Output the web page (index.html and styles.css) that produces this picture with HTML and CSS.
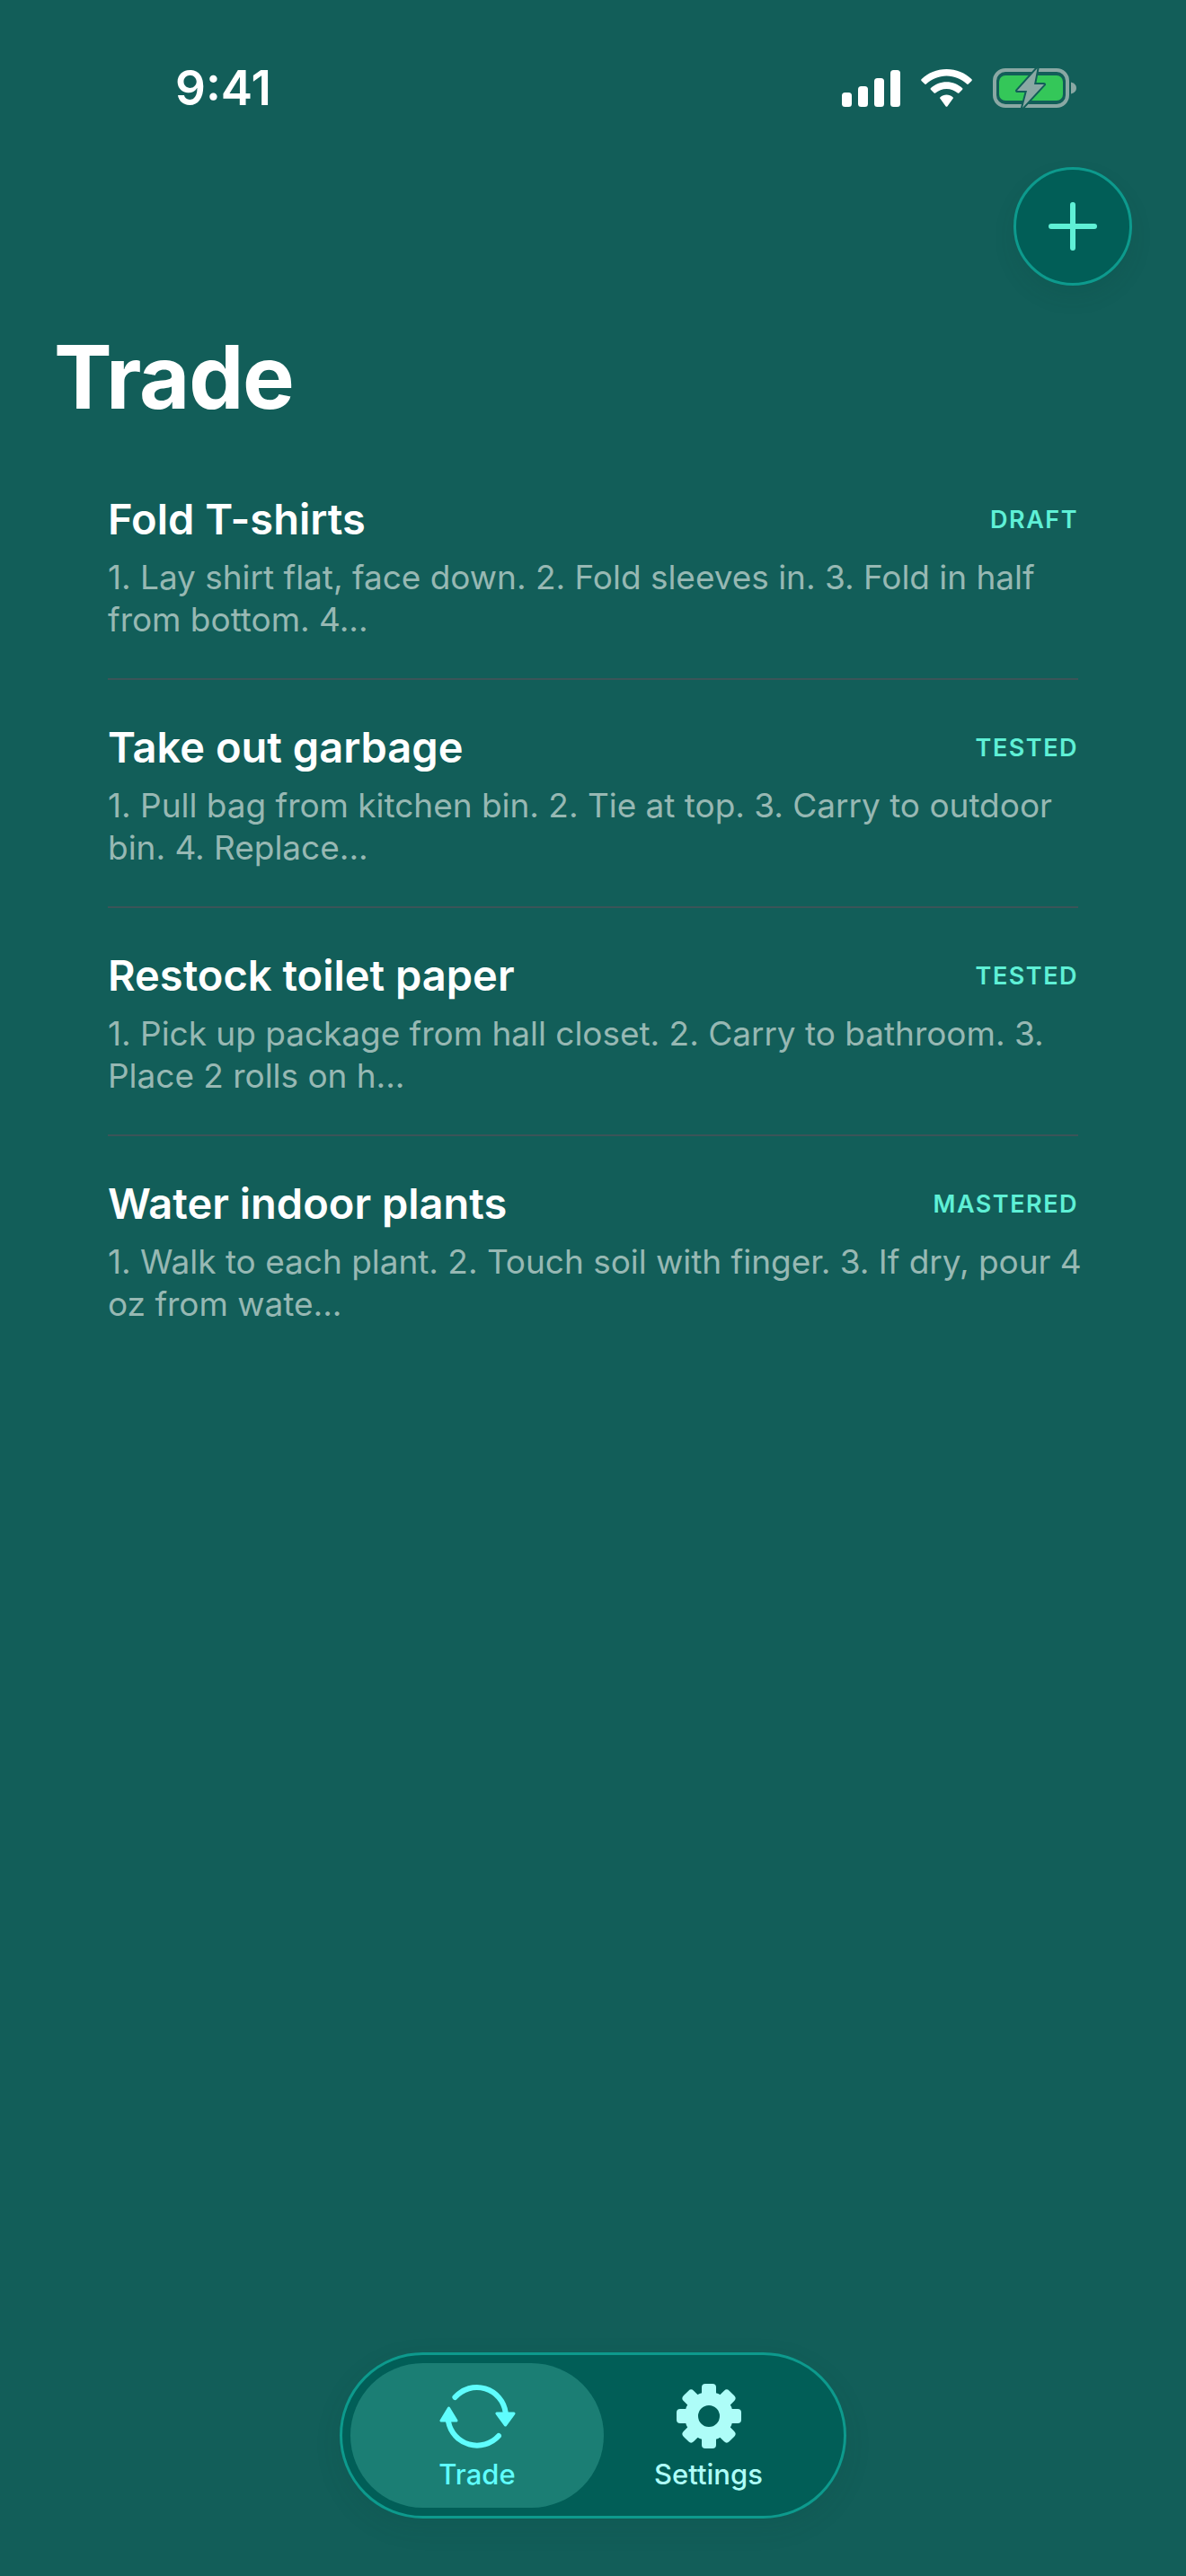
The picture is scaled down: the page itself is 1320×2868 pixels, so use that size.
FILE: index.html
```html
<!DOCTYPE html>
<html lang="en">
<head>
<meta charset="utf-8">
<title>Trade</title>
<link rel="stylesheet" href="styles.css">
</head>
<body>
<div class="screen">
  <header class="status">
    <span class="time">9:41</span>
    <div class="status-icons">
      <svg class="signal" width="65" height="41" viewBox="0 0 65 41"><rect x="0" y="25" width="11" height="16" rx="3.5"/><rect x="18" y="18" width="11" height="23" rx="3.5"/><rect x="36" y="9" width="11" height="32" rx="3.5"/><rect x="54" y="0" width="11" height="41" rx="3.5"/></svg>
      <svg class="wifi" width="57" height="42" viewBox="0 0 57 42"><path d="M28.500 0C17.500 0 7.800 4.200 0.500 11.300C0 11.800 0 12.400 0.500 12.900L4.200 16.600C4.700 17.100 5.300 17.100 5.900 16.600C12 11 19.900 7.500 28.500 7.500C37.100 7.500 45 11 51.100 16.600C51.700 17.100 52.300 17.100 52.800 16.600L56.500 12.900C57 12.400 57 11.800 56.500 11.300C49.200 4.200 39.500 0 28.500 0Z"/><path d="M28.500 14.300C21.800 14.300 15.700 16.900 11 21.100C10.400 21.600 10.400 22.200 10.900 22.700L14.600 26.400C15.100 26.900 15.700 26.900 16.200 26.500C19.500 23.700 23.800 21.900 28.500 21.900C33.200 21.900 37.500 23.700 40.800 26.500C41.300 26.900 41.900 26.900 42.400 26.400L46.100 22.700C46.600 22.200 46.600 21.600 46 21.100C41.300 16.900 35.200 14.300 28.500 14.300Z"/><path d="M28.500 28.600C25.900 28.600 23.400 29.600 21.500 31.200C20.900 31.700 20.900 32.300 21.400 32.800L27.500 41.200C28 41.900 29 41.900 29.500 41.200L35.600 32.800C36.100 32.300 36.100 31.700 35.500 31.200C33.600 29.600 31.100 28.600 28.500 28.600Z"/></svg>
      <svg class="battery" width="94" height="46" viewBox="0 0 94 46"><rect x="2" y="3" width="81" height="40" rx="12" fill="none" stroke="#8aa8a4" stroke-width="4"/><path d="M87 16.500C91 17.500 93 20 93 23C93 26 91 28.500 87 29.500Z" fill="#8aa8a4"/><rect x="7" y="9" width="71" height="28" rx="7" fill="#34c759"/><path d="M49.500 1L27 26H38L33 45L57 19H46Z" fill="#8aa8a4" stroke="#125e59" stroke-width="4" stroke-linejoin="round" paint-order="stroke"/></svg>
    </div>
  </header>

  <div class="toolbar">
    <button class="fab" type="button" aria-label="Add">
      <svg width="54" height="54" viewBox="0 0 54 54"><path d="M27 3V51M3 27H51" fill="none" stroke="#5ff0d6" stroke-width="6" stroke-linecap="round"/></svg>
    </button>
  </div>

  <h1 class="title">Trade</h1>

  <ul class="list">
    <li class="row">
      <div class="row-head"><span class="row-title">Fold T-shirts</span><span class="tag">DRAFT</span></div>
      <p class="row-desc">1. Lay shirt flat, face down. 2. Fold sleeves in. 3. Fold in half from bottom. 4...</p>
    </li>
    <li class="row">
      <div class="row-head"><span class="row-title">Take out garbage</span><span class="tag">TESTED</span></div>
      <p class="row-desc">1. Pull bag from kitchen bin. 2. Tie at top. 3. Carry to outdoor bin. 4. Replace...</p>
    </li>
    <li class="row">
      <div class="row-head"><span class="row-title">Restock toilet paper</span><span class="tag">TESTED</span></div>
      <p class="row-desc">1. Pick up package from hall closet. 2. Carry to bathroom. 3. Place 2 rolls on h...</p>
    </li>
    <li class="row">
      <div class="row-head"><span class="row-title">Water indoor plants</span><span class="tag">MASTERED</span></div>
      <p class="row-desc">1. Walk to each plant. 2. Touch soil with finger. 3. If dry, pour 4 oz from wate...</p>
    </li>
  </ul>

  <nav class="tabbar">
    <div class="tab tab-active">
      <svg width="90" height="78" viewBox="0 0 90 78"><path d="M20.400 18A32.300 32.300 0 0 1 76.700 35M69 61A32.500 32.500 0 0 1 13 45" fill="none" stroke="#5ffdfd" stroke-width="6" stroke-linecap="round"/><path d="M67 36H86L76.500 49ZM5 44H22L13.500 30Z" fill="#5ffdfd" stroke="#5ffdfd" stroke-width="3" stroke-linejoin="round"/></svg>
      <span class="tab-label">Trade</span>
    </div>
    <div class="tab tab-idle">
      <svg width="74" height="78" viewBox="-37 -39 74 78"><g fill="#aefdf8"><rect x="-8" y="-36" width="16" height="16" rx="4"/><rect x="-8" y="-36" width="16" height="16" rx="4" transform="rotate(45)"/><rect x="-8" y="-36" width="16" height="16" rx="4" transform="rotate(90)"/><rect x="-8" y="-36" width="16" height="16" rx="4" transform="rotate(135)"/><rect x="-8" y="-36" width="16" height="16" rx="4" transform="rotate(180)"/><rect x="-8" y="-36" width="16" height="16" rx="4" transform="rotate(225)"/><rect x="-8" y="-36" width="16" height="16" rx="4" transform="rotate(270)"/><rect x="-8" y="-36" width="16" height="16" rx="4" transform="rotate(315)"/></g><circle r="19.500" fill="none" stroke="#aefdf8" stroke-width="15"/></svg>
      <span class="tab-label">Settings</span>
    </div>
  </nav>
</div>
</body>
</html>
```
FILE: styles.css
```css
* { box-sizing: border-box; }
html, body { margin: 0; padding: 0; }
body { background: #125e59; font-family: Inter, "Liberation Sans", sans-serif; color: #fff; }
.screen { display: flex; flex-direction: column; height: 2868px; overflow: hidden; }

.status { display: flex; justify-content: space-between; align-items: center; height: 46px; margin-top: 75px; padding: 0 121px 0 195px; }
.time { font-size: 53px; font-weight: 600; line-height: 46px; }
.status-icons { display: flex; align-items: center; gap: 23px; }
.signal, .wifi { fill: #fff; display: block; }
.battery { display: block; }

.toolbar { display: flex; justify-content: flex-end; padding-right: 60px; margin-top: 65px; }
.fab { width: 132px; height: 132px; padding: 0; border-radius: 50%; border: 3px solid #0d9a8d; background: #015e57; display: flex; align-items: center; justify-content: center; box-shadow: 0 12px 24px rgba(0, 60, 50, 0.1); }
.fab svg { display: block; }

.title { margin: 42px 0 0 60px; font-size: 97px; line-height: 120px; font-weight: 700; letter-spacing: -1.200px; }

.list { list-style: none; margin: 23px 0 0; padding: 0 120px; }
.row { height: 254px; padding-top: 45px; border-bottom: 2px solid #3b5458; }
.row:last-child { border-bottom: 0; }
.row-head { display: flex; justify-content: space-between; align-items: center; height: 58px; }
.row-title { font-size: 47px; font-weight: 600; }
.tag { font-size: 27px; font-weight: 600; letter-spacing: 1.500px; color: #5ff0d6; padding-top: 2px; }
.row-desc { margin: 13px -20px 0 0; font-size: 37px; line-height: 47px; letter-spacing: -0.030px; color: #97b8b3; }

.tabbar { margin: auto auto 64px; width: 564px; height: 185px; padding: 9px; border: 3px solid #0d9a8d; border-radius: 93px; background: #015e57; display: flex; align-items: stretch; box-shadow: 0 10px 30px rgba(0, 60, 50, 0.1); }
.tab { display: flex; flex-direction: column; align-items: center; justify-content: flex-start; padding-top: 20px; }
.tab svg { display: block; }
.tab-active { width: 282px; border-radius: 81px; background: #1b7e74; color: #5ffdfd; }
.tab-idle { width: 233px; color: #aefdf8; }
.tab-label { font-size: 31px; font-weight: 500; line-height: 36px; margin-top: 8px; }
```
